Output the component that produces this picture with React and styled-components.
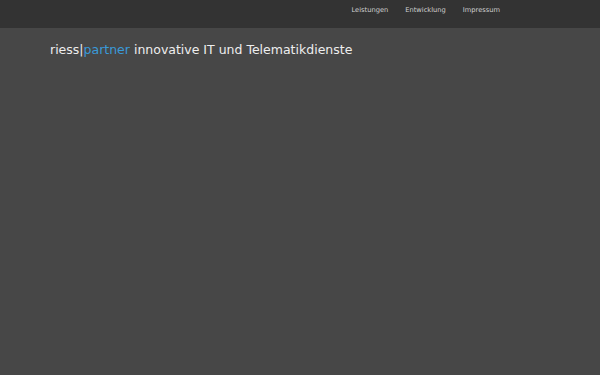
import React from 'react';
import styled, { createGlobalStyle } from 'styled-components';

const GlobalStyle = createGlobalStyle`
  html, body {
    margin: 0;
    padding: 0;
    background: #474747;
    font-family: "DejaVu Sans", sans-serif;
  }
`;

const Page = styled.div`
  min-height: 375px;
  background: #474747;
`;

const TopBar = styled.nav`
  box-sizing: border-box;
  height: 28px;
  background: #333333;
  display: flex;
  justify-content: flex-end;
  align-items: flex-start;
  padding: 6px 100px 0 0;
`;

const NavLink = styled.a`
  color: #d0d0d0;
  font-size: 6.7px;
  line-height: 9px;
  text-decoration: none;
  margin-left: 17px;
`;

const Header = styled.h1`
  margin: 0;
  padding: 14px 0 0 50px;
  font-size: 12.5px;
  font-weight: normal;
  color: #eeeeee;
`;

const Accent = styled.span`
  color: #3a9ad9;
`;

export default function App() {
  return (
    <Page>
      <GlobalStyle />
      <TopBar>
        <NavLink href="#">Leistungen</NavLink>
        <NavLink href="#">Entwicklung</NavLink>
        <NavLink href="#">Impressum</NavLink>
      </TopBar>
      <Header>
        riess|<Accent>partner</Accent> innovative IT und Telematikdienste
      </Header>
    </Page>
  );
}
